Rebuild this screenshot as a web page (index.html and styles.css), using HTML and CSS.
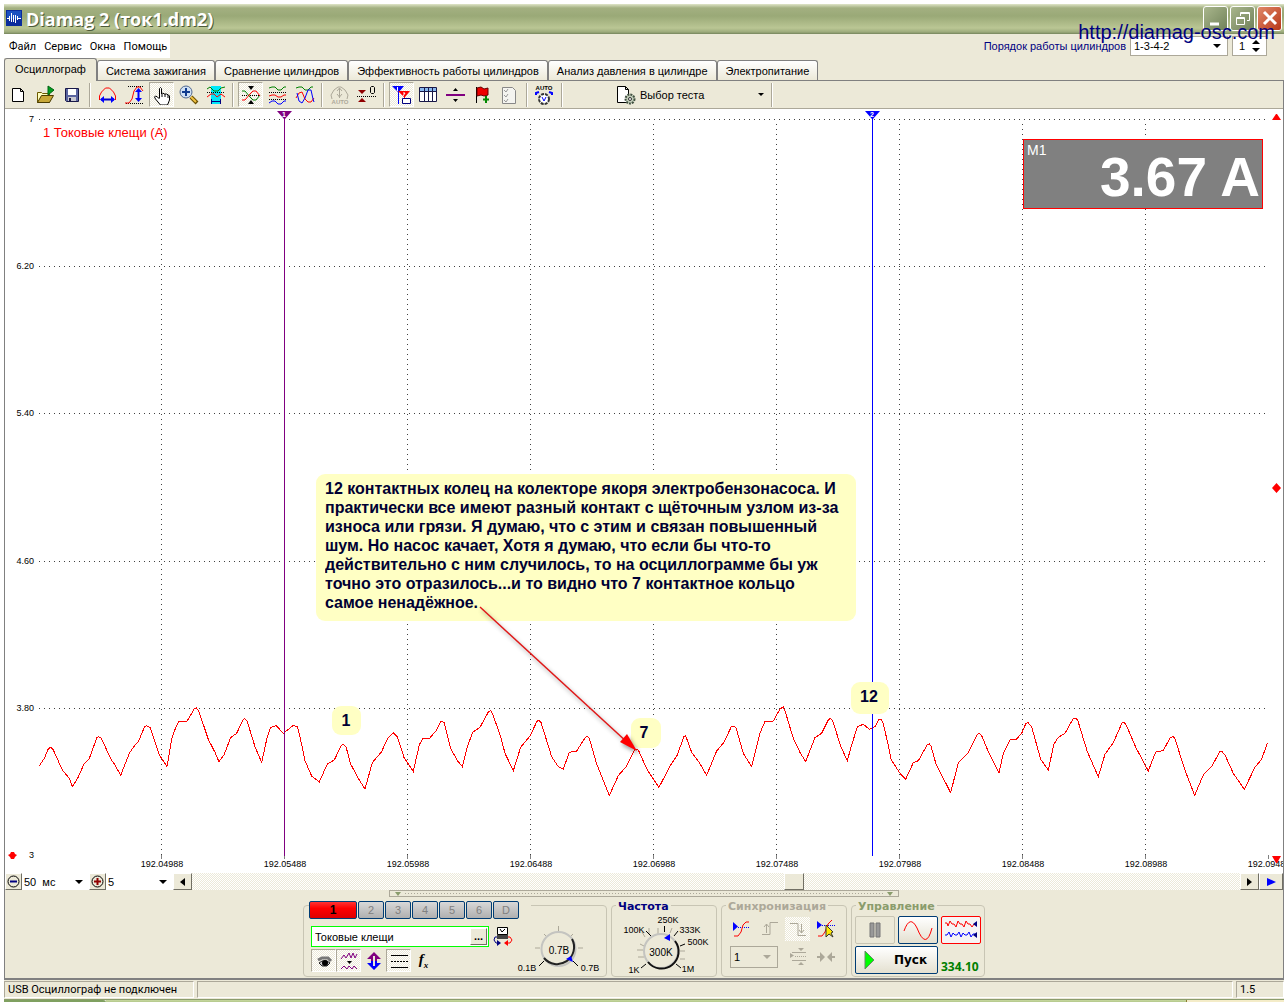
FILE: index.html
```html
<!DOCTYPE html>
<html lang="ru">
<head>
<meta charset="utf-8">
<title>Diamag 2 (ток1.dm2)</title>
<link rel="stylesheet" href="styles.css">
</head>
<body>
<div class="window">
  <header class="titlebar">
    <svg class="app-icon" width="16" height="16" viewBox="0 0 16 16"><rect width="16" height="16" fill="#0a2c9c"/><rect x="1" y="1" width="14" height="8" fill="#1a50c0"/><path d="M1 8.500h2M3.500 6v5M5.500 3v9M7.500 5v7M9.500 5v8M11.500 6v4M12 8.500h3" fill="none" stroke="#fff"/></svg>
    <h1>Diamag 2 (ток1.dm2)</h1>
    <div class="window-buttons">
      <button class="win-btn" aria-label="Свернуть"><svg width="20" height="20" viewBox="0 0 20 20"><path d="M4 16h9" stroke="#fff" stroke-width="3"/></svg></button>
      <button class="win-btn" aria-label="Развернуть"><svg width="20" height="20" viewBox="0 0 20 20" fill="none" stroke="#fff"><path d="M7.500 8V4.500h9v8H14M7 5.500h10M3.500 9.500h8v7h-8zM3 10.500h9"/></svg></button>
      <button class="win-btn close" aria-label="Закрыть"><svg width="20" height="20" viewBox="0 0 20 20"><path d="M4 4l12 12M16 4L4 16" stroke="#fff" stroke-width="3"/></svg></button>
    </div>
  </header>
  <a class="site-link" href="http://diamag-osc.com">http://diamag-osc.com</a>

  <div class="menu-row">
    <nav class="menu">
      <a href="#file">Файл</a><a href="#service">Сервис</a><a href="#windows">Окна</a><a href="#help">Помощь</a>
    </nav>
    <div class="order">
      <label for="order">Порядок работы цилиндров</label>
      <span class="drop framed order-drop"><select id="order"><option>1-3-4-2</option></select><svg width="8" height="4" viewBox="0 0 8 4"><path d="M0 0h8L4 4z"/></svg></span>
      <span class="spin framed"><input id="cyl" aria-label="Цилиндр" value="1"><svg width="8" height="12" viewBox="0 0 8 12"><path d="M0 4h8L4 0zM0 8h8l-4 4z"/></svg></span>
    </div>
  </div>

  <nav class="tabs">
    <button class="tab active">Осциллограф</button>
    <button class="tab">Система зажигания</button>
    <button class="tab">Сравнение цилиндров</button>
    <button class="tab">Эффективность работы цилиндров</button>
    <button class="tab">Анализ давления в цилиндре</button>
    <button class="tab">Электропитание</button>
  </nav>

  <main class="page">
    <div class="toolbar">
      <button class="tool" aria-label="Новый"><svg viewBox="0 0 20 20"><path d="M3.500 3.500h8l3 3v10h-11zM11.500 3.500v3h3" fill="#fff" stroke="#000"/></svg></button>
      <button class="tool" aria-label="Открыть"><svg viewBox="0 0 20 20"><path d="M1.500 17.500v-10h4l1 1h7v9z" fill="#ffffc0" stroke="#6b5a00"/><path d="M1.500 17.500l4-7h12l-4 7z" fill="#c8a838" stroke="#4a3c00"/><path d="M12 1l6 4-6 5z" fill="#00a020" stroke="#006010"/></svg></button>
      <button class="tool" aria-label="Сохранить"><svg viewBox="0 0 20 20"><path d="M2.500 3.500h13v13h-12l-1-1z" fill="#5a64a0" stroke="#181848"/><path d="M5 4h8v6H5z" fill="#fff"/><path d="M5 12h8v4H5z" fill="#c8c8d0"/><path d="M6 13h2v3H6z" fill="#181848"/></svg></button>
      <span class="sep"></span>
      <button class="tool" aria-label="Период"><svg viewBox="0 0 20 20" fill="none"><path d="M1.500 15v-4l2-4 4-4h4l4 4 2 4v4" stroke="#f00"/><path d="M3 14.500h13" stroke="#00c" stroke-width="2"/><path d="M6 11v7l-4-3.500zM13 11v7l4-3.500z" fill="#00f"/></svg></button>
      <button class="tool" aria-label="Амплитуда"><svg viewBox="0 0 20 20" fill="none"><path d="M3 1.500h15M1 18.500h17" stroke="#000" stroke-dasharray="1 1"/><path d="M0 18h4l3-4 2-8 3-4h3l3 4" stroke="#f00"/><path d="M13.500 5v10" stroke="#00f" stroke-width="2"/><path d="M10 7l3.500-4L17 7zM10 13h7l-3.500 4z" fill="#00f"/></svg></button>
      <button class="tool pressed" aria-label="Рука"><svg viewBox="0 0 20 20"><path d="M7.500 13V3.500l1-1 1 1V9l1-1 2 1 2-0 2 1 1 1v4l-2 5h-7l-5-6-1-2 1-1 2 1 2 2M10 9v3M13 9v3M16 10v3" fill="#fff" stroke="#000"/></svg></button>
      <button class="tool" aria-label="Лупа"><svg viewBox="0 0 20 20"><path d="M12 12l6 6" stroke="#6b5000" stroke-width="4"/><path d="M12 12l5 5" stroke="#f0c040" stroke-width="2"/><circle cx="7" cy="7" r="6" fill="#cfe0f4" stroke="#506890" stroke-width="1"/><path d="M3 7h8M7 3v8" stroke="#103c90" stroke-width="2"/></svg></button>
      <button class="tool" aria-label="Фрагмент"><svg viewBox="0 0 20 20" fill="none"><path d="M5 1h10v18H5z" fill="#00e8f8"/><path d="M1 4l3-2 4 4h4l3-3 4-1" stroke="#008000"/><path d="M1 7.500h18" stroke="#000" stroke-dasharray="1 1"/><path d="M1 12l4-3h3l3 3 4-3 4 3" stroke="#f00"/><path d="M5.500 14v5M14.500 14v5M6 16.500h8" stroke="#000080"/></svg></button>
      <span class="sep"></span>
      <button class="tool pressed" aria-label="Совместить"><svg viewBox="0 0 20 20" fill="none"><path d="M1 10.500h18" stroke="#000" stroke-dasharray="1 1"/><path d="M1 6h3l5 6 3 3h3l4-5" stroke="#008000"/><path d="M1 15h3l5-6 3-3h3l4 5" stroke="#f00"/><path d="M7 1h6l-3 4zM7 19h6l-3-4z" fill="#000"/></svg></button>
      <button class="tool" aria-label="Разделить"><svg viewBox="0 0 20 20" fill="none"><path d="M1 3l3-1h3l3 3h3l3-3h2" stroke="#008000"/><path d="M1 7.500h18M1 14.500h18" stroke="#000" stroke-dasharray="1 1"/><path d="M1 11l3-1h3l3 2h3l3-2h2" stroke="#f00"/><path d="M1 18l3-2h3l3 3h3l3-3h2" stroke="#00f"/></svg></button>
      <button class="tool" aria-label="Наложить"><svg viewBox="0 0 20 20" fill="none"><path d="M1 3l3-1h3l3 3h3l3-3h2" stroke="#008000"/><path d="M1 13l3-5 3-1 3 7 3 3h3l3-4" stroke="#f00"/><path d="M2 8l2 8 3 2 3-5 3-8h3l2 9 1 3" stroke="#00f"/></svg></button>
      <span class="sep"></span>
      <button class="tool" aria-label="Авто амплитуда" disabled><svg viewBox="0 0 20 20" fill="none" stroke="#aca899"><path d="M2 14l-1-4 3-5 4-3h3l4 3 3 5-1 4M9.500 3v10M7 6l2.500-3L12 6M7 9l2.500 3L12 9"/><text x="10" y="19" class="icon-text muted">AUTO</text></svg></button>
      <button class="tool" aria-label="Ноль"><svg viewBox="0 0 20 20"><path d="M1 5h8l-4 4zM1 17h8l-4-4z" fill="#900000"/><path d="M0 11.500h19" stroke="#000" stroke-dasharray="1 1"/><path d="M13.500 2.500l1-1h2l1 1v5l-1 1h-2l-1-1z" fill="none" stroke="#000"/></svg></button>
      <span class="sep"></span>
      <button class="tool pressed" aria-label="Маркеры"><svg viewBox="0 0 20 20"><path d="M0 1h12L7 7v12H6V7z" fill="#00f"/><path d="M6 6h12l-5 6v4h-1v-4z" fill="#f00"/><path d="M5.500 2v4M11 8h2l-2 3" fill="none" stroke="#fff"/><path d="M10.500 13.500h8v5h-8z" fill="#fff" stroke="#000080"/></svg></button>
      <button class="tool" aria-label="Таблица"><svg viewBox="0 0 20 20"><path d="M.500 2.500h17v14h-17z" fill="#fff" stroke="#181848"/><path d="M1 3h16v3H1z" fill="#88b8f0"/><path d="M1 6.500h16M5.500 3v13M9.500 3v13M13.500 3v13" stroke="#181848"/></svg></button>
      <button class="tool" aria-label="Линия"><svg viewBox="0 0 20 20"><path d="M0 10h19" stroke="#800080" stroke-width="2"/><path d="M7 6h5L9.500 3zM7 14h5l-2.500 3z"/></svg></button>
      <button class="tool" aria-label="Флаг"><svg viewBox="0 0 20 20"><path d="M3.500 2v16" stroke="#000"/><path d="M4 3l4-1 3 2 4-1v7l-4 1-3-1-4 1z" fill="#e00" stroke="#600"/><path d="M10 14.500h6M13 11v7" stroke="#080" stroke-width="2"/></svg></button>
      <button class="tool" aria-label="Список"><svg viewBox="0 0 20 20"><path d="M2.500 2.500h10l3 3v13h-13z" fill="#f4f4f0" stroke="#888"/><path d="M4 5l2 2 2-3M4 10l2 2 2-3M4 15l2 2 2-3" fill="none" stroke="#999"/></svg></button>
      <span class="sep"></span>
      <button class="tool" aria-label="Авто"><svg viewBox="0 0 20 20"><text x="9" y="5" class="icon-text">AUTO</text><circle cx="9" cy="14" r="5" fill="#fff" stroke="#333" stroke-width="2" stroke-dasharray="3 1"/><path d="M7 12l2 4 2-4" fill="none" stroke="#00f"/><path d="M1 10V8l3-1M17 10V8l-3-1" fill="none" stroke="#00f" stroke-width="2"/></svg></button>
      <span class="sep"></span>
      <button class="test-select"><svg width="20" height="20" viewBox="0 0 20 20"><path d="M1.500 1.500h8l3 3v13h-11zM9.500 1.500v3h3" fill="#fff" stroke="#000"/><circle cx="14" cy="14" r="4.500" fill="#c0ccb8" stroke="#405040" stroke-width="2" stroke-dasharray="2 1"/><circle cx="14" cy="14" r="1.500" fill="#fff" stroke="#333"/></svg><span>Выбор теста</span><svg class="caret" width="6" height="3" viewBox="0 0 6 3"><path d="M0 0h6L3 3z"/></svg></button>
      <span class="sep"></span>
    </div>

    <svg class="chart" viewBox="5 109 1278 764">
      <g class="grid">
        <path d="M39 119.500H1267M39 266.500H1267M39 413.500H1267M39 561.500H1267M39 708.500H1267"/>
        <path d="M161.500 124V855M284.500 124V855M407.500 124V855M530.500 124V855M653.500 124V855M776.500 124V855M899.500 124V855M1022.500 124V855M1145.500 124V855"/>
      </g>
      <path class="ticks" d="M161.500 855v4M284.500 855v4M407.500 855v4M530.500 855v4M653.500 855v4M776.500 855v4M899.500 855v4M1022.500 855v4M1145.500 855v4M1268.500 855v4"/>
      <g class="axis y-axis">
        <text x="34" y="122">7</text><text x="34" y="269">6.20</text><text x="34" y="416">5.40</text><text x="34" y="564">4.60</text><text x="34" y="711">3.80</text><text x="34" y="858">3</text>
      </g>
      <g class="axis x-axis">
        <text x="162" y="867">192.04988</text><text x="285" y="867">192.05488</text><text x="408" y="867">192.05988</text><text x="531" y="867">192.06488</text><text x="654" y="867">192.06988</text><text x="777" y="867">192.07488</text><text x="900" y="867">192.07988</text><text x="1023" y="867">192.08488</text><text x="1146" y="867">192.08988</text><text x="1269" y="867">192.09488</text>
      </g>
      <text class="legend" x="43" y="137">1 Токовые клещи (А)</text>
      <g class="wave">
        <polyline transform="translate(0 690) scale(.3333)" points="118,227 133,205 145,176 152,172 160,180 187,240 208,265 217,290 233,265 252,222 267,208 291,142 296,140 304,145 333,208 345,225 362,256 388,190 405,165 415,155 434,110 440,107 450,112 478,195 501,230 515,148 527,113 538,93 560,96 583,56 589,53 597,65 625,148 645,187 657,215 672,195 692,143 710,130 730,88 735,86 742,95 765,170 785,217 802,140 812,112 829,107 850,130 865,118 880,106 892,110 900,140 915,212 935,258 958,276 982,222 1003,210 1024,166 1030,163 1038,170 1052,222 1075,265 1095,297 1117,218 1145,185 1163,145 1180,128 1192,140 1212,202 1240,244 1258,165 1268,146 1290,144"/>
        <polyline transform="translate(430 690) scale(.3333)" points="0,143 20,120 33,93 42,97 62,175 82,212 97,230 112,170 128,127 150,112 175,66 182,62 188,72 212,140 225,190 250,242 272,172 300,138 321,94 326,91 333,97 365,200 385,230 400,237 418,187 440,183 466,142 472,140 478,145 500,222 538,316 565,257 590,228 615,178 625,180 652,240 687,292 722,225 742,195 762,139 767,137 785,187 808,218 830,256 860,183 882,157 904,110 911,108 918,113 940,190 965,230 990,130 1005,94 1030,93 1050,57 1060,50 1068,72 1090,145 1110,187 1127,215 1155,143 1175,130 1196,88 1202,86 1208,92 1232,168 1252,212 1261,180"/>
        <polyline transform="translate(850 670) scale(.3333)" points="0,242 22,170 40,163 58,178 75,170 86,149 92,147 98,155 115,225 123,268 150,310 167,328 190,278 205,272 232,224 238,222 243,228 258,282 302,368 325,278 355,248 383,192 389,190 395,197 415,245 447,309 460,250 480,210 500,207 515,190 528,160 534,158 545,170 572,268 595,300 612,222 625,202 645,190 669,147 677,145 683,150 712,245 745,320 765,253 790,218 816,159 823,157 830,168 858,233 895,303 917,246 940,242 961,202 969,200 975,206 1003,295 1034,376 1060,315 1085,290 1109,246 1117,246 1125,255 1150,310 1183,358 1215,292 1235,268 1252,220"/>
      </g>
      <g class="cursor cursor-a"><path class="stem" d="M284.500 117V856"/><path d="M277 111h15l-7 8h-1z"/><text x="284" y="117">1</text></g>
      <g class="cursor cursor-b"><path class="stem" d="M872.500 117V856"/><path d="M865 111h15l-7 8h-1z"/><text x="872" y="117">2</text></g>
      <path fill="#f00" d="M1272 120h9l-4-6h-1zM1272 856h9l-4 7h-1zM1272 488l4.500-5 4.500 5-4.500 5zM8 855l2-1 1-2h3l1 2 2 1-2 2-1 2h-3l-1-2z"/>
      <g>
        <rect x="1023.500" y="139.500" width="239" height="69" fill="#808080" stroke="#f00"/>
        <text class="meter-name" x="1027" y="155">M1</text>
        <text class="meter-value" x="1260" y="196">3.67 A</text>
      </g>
      <g class="notes">
        <rect x="332" y="706" width="29" height="29" rx="9"/><rect x="631" y="718" width="30" height="30" rx="9"/><rect x="851" y="682" width="38" height="32" rx="9"/><rect x="316" y="474" width="540" height="147" rx="9"/>
        <text x="346" y="726">1</text><text x="644" y="738">7</text><text x="869" y="702">12</text>
        <foreignObject x="325" y="479" width="520" height="140"><p class="note-text">12 контактных колец на колекторе якоря электробензонасоса. И практически все имеют разный контакт с щёточным узлом из-за износа или грязи. Я думаю, что с этим и связан повышенный шум. Но насос качает, Хотя я думаю, что если бы что-то действительно с ним случилось, то на осциллограмме бы уж точно это отразилось...и то видно что 7 контактное кольцо самое ненадёжное.</p></foreignObject>
      </g>
      <g class="arrow"><path d="M480 607L628 743" fill="none" stroke="#e01818" stroke-width="1.500"/><path d="M637 751l-17-9 7-8z" fill="#f00"/></g>
    </svg>

    <div class="scale-row">
      <button class="raised mini" aria-label="Уменьшить"><svg width="13" height="13" viewBox="0 0 13 13"><circle cx="6.500" cy="6.500" r="5.500" fill="none" stroke="#000"/><path d="M3 6.500h7" stroke="#000080" stroke-width="2"/></svg></button>
      <span class="drop scale-drop"><select aria-label="Развёртка"><option>50&nbsp; мс</option></select><svg width="8" height="4" viewBox="0 0 8 4"><path d="M0 0h8L4 4z"/></svg></span>
      <button class="raised mini" aria-label="Увеличить"><svg width="13" height="13" viewBox="0 0 13 13"><circle cx="6.500" cy="6.500" r="5.500" fill="none" stroke="#000"/><path d="M3 6.500h7M6.500 3v7" stroke="#900000" stroke-width="2"/></svg></button>
      <span class="drop scale-drop"><select aria-label="Деления"><option>5</option></select><svg width="8" height="4" viewBox="0 0 8 4"><path d="M0 0h8L4 4z"/></svg></span>
      <button class="raised arrow-btn" aria-label="Влево"><svg width="5" height="8" viewBox="0 0 5 8"><path d="M5 0v8L0 4z"/></svg></button>
      <div class="track"><span class="before"></span><button class="raised thumb" aria-label="Прокрутка"></button><span class="after"></span></div>
      <button class="raised arrow-btn" aria-label="Вправо"><svg width="5" height="8" viewBox="0 0 5 8"><path d="M0 0v8l5-4z"/></svg></button>
      <button class="raised play-btn" aria-label="В конец"><svg width="9" height="8" viewBox="0 0 9 8"><path d="M0 0v8l9-4z" fill="#00f"/></svg></button>
    </div>

    <div class="grip"><svg width="6" height="4" viewBox="0 0 6 4"><path d="M0 0h6L3 4z"/></svg><i></i><svg width="6" height="4" viewBox="0 0 6 4"><path d="M0 0h6L3 4z"/></svg></div>

    <div class="panel">
      <section class="group channels">
        <div class="channel-tabs">
          <button class="channel on">1</button><button class="channel">2</button><button class="channel">3</button><button class="channel">4</button><button class="channel">5</button><button class="channel">6</button><button class="channel">D</button>
        </div>
        <div class="channel-body">
          <div class="channel-form">
            <div class="sensor-row">
              <div class="sensor"><input aria-label="Датчик" value="Токовые клещи"><button class="raised">...</button></div>
              <svg width="20" height="20" viewBox="0 0 20 20"><path d="M4.500 1.500h10v7h-10z" fill="#fff" stroke="#000"/><path d="M4 9h11v4H4z" fill="#444"/><path d="M7 3l2 3 3-3" fill="none" stroke="#000"/><path d="M4 11H2l-1 3 2 3h3" fill="none" stroke="#000080"/><path d="M15 11h2l2 3-2 3h-3" fill="none" stroke="#f00"/><path d="M4 14l4 3-4 3z" fill="#000080"/><path d="M15 14l-4 3 4 3z" fill="#f00"/></svg>
            </div>
            <div class="channel-tools">
              <button class="tool pressed" aria-label="Показать"><svg viewBox="0 0 20 20"><path d="M4 9l4-2h6l3 3" fill="none" stroke="#777" stroke-width="3"/><path d="M5 12l3-2h5l3 2-3 3H8z" fill="#ccc" stroke="#222"/><circle cx="11" cy="12" r="3" fill="#000"/></svg></button>
              <button class="tool pressed" aria-label="Сглаживание"><svg viewBox="0 0 20 20" fill="none" stroke="#800080"><path d="M2 8l3-4 2 3 3-5 2 5 2-5 2 5 2-4M2 18l3-3 3 3 2-3 3 3 2-3 3 3"/><path d="M8 10h5l-2.500 3z" fill="#000" stroke="none"/></svg></button>
              <button class="tool" aria-label="Инверсия"><svg viewBox="0 0 20 20"><path d="M10 1l7 7h-4v2H7V8H3z" fill="#800080"/><path d="M10 19l7-7h-4v-2H7v2H3z" fill="#00f"/><path d="M10 5v10" stroke="#ece9d8" stroke-width="2"/></svg></button>
              <button class="tool pressed" aria-label="Линии"><svg viewBox="0 0 20 20"><path d="M2 4.500h17M2 16.500h17" stroke="#000"/><path d="M2 10.500h17" stroke="#000" stroke-dasharray="2 1"/></svg></button>
              <button class="tool fx" aria-label="Функция">f<sub>x</sub></button>
            </div>
          </div>
          <svg class="knob" width="86" height="60" viewBox="515 920 86 60">
            <path class="dial-tick light" d="M557.500 927v5M543 935l3 3M572 935l-3 3M534 949h5M577 949h5"/>
            <path class="dial-tick" d="M538 967l5-5M577 967l-5-5"/>
            <circle cx="557.500" cy="950" r="17" fill="none" stroke="#c4c4c0" stroke-width="2"/><path d="M571 940a17 17 0 0 1-28 19" fill="none" stroke="#222" stroke-width="2"/>
            <path d="M565 960l5-3 2 6z" fill="#00f"/>
            <text class="dial-value" x="558" y="955">0.7В</text><text class="dial-label" x="526" y="972">0.1В</text><text class="dial-label" x="589" y="972">0.7В</text>
          </svg>
        </div>
      </section>

      <section class="group frequency">
        <h2>Частота</h2>
        <svg class="knob" width="103" height="64" viewBox="612 912 103 64">
          <g class="dial-tick light"><path d="M649 927v6M658 927v6M642 931l3 5M672 927l-2 5M637 949h6M638 956h6M640 943l4 2M680 958h5M680 950h5"/></g>
          <path class="dial-tick" d="M664.500 925v6M646 930l5 5M678 930l-4 5M680 945l5-2M641 967l5-4M681 967l-5-4"/>
          <circle cx="661" cy="950" r="17" fill="none" stroke="#c4c4c0" stroke-width="2"/><path d="M675 940a17 17 0 0 1-27 21" fill="none" stroke="#111" stroke-width="2"/>
          <path d="M664 937l6-4v7z" fill="#00f"/>
          <text class="dial-value" x="661" y="955">300K</text><text class="dial-label" x="634" y="932">100K</text><text class="dial-label" x="668" y="922">250K</text><text class="dial-label" x="690" y="932">333K</text><text class="dial-label" x="698" y="944">500K</text><text class="dial-label" x="634" y="972">1K</text><text class="dial-label" x="688" y="971">1M</text>
        </svg>
      </section>

      <section class="group sync">
        <h2>Синхронизация</h2>
        <div class="sync-grid">
          <button class="tool" aria-label="Уровень"><svg viewBox="0 0 20 20"><path d="M1 3v9l5-4.500z" fill="#00f"/><path d="M6 8.500h12" stroke="#00f" stroke-dasharray="1 1"/><path d="M2 17h4l3-4 2-7 3-3h3" fill="none" stroke="#f00"/></svg></button>
          <button class="tool" disabled aria-label="Фронт"><svg viewBox="0 0 20 20" fill="none" stroke="#aca899"><path d="M2 15.500h8v-12h8M6.500 5v9M4 8l2.500-3L9 8"/></svg></button>
          <button class="tool checker" disabled aria-label="Спад"><svg viewBox="0 0 20 20" fill="none" stroke="#aca899"><path d="M2 4.500h8v12h8M13.500 5v9M11 11l2.500 3 2.500-3"/></svg></button>
          <button class="tool" aria-label="Указать"><svg viewBox="0 0 20 20"><path d="M1 2v8l5-4z" fill="#00f"/><path d="M6 6.500h13" stroke="#00f" stroke-dasharray="1 1"/><path d="M2 17h4l3-4 3-8 4-4" fill="none" stroke="#f00"/><path d="M10 6l7 7-2 1 2 4-4-3-3 3z" fill="#ffe800" stroke="#333"/></svg></button>
          <span class="drop sync-drop"><select disabled aria-label="Канал"><option>1</option></select><svg width="8" height="4" viewBox="0 0 8 4"><path d="M0 0h8L4 4z" fill="#aca899"/></svg></span>
          <button class="tool" disabled aria-label="Окно"><svg viewBox="0 0 20 20" fill="#aca899" stroke="#aca899"><path d="M2 6v5l4-2.500zM10 1h6l-3 3zM10 18h6l-3-3z" stroke="none"/><path d="M4 5.500h14M4 13.500h14"/><path d="M7 9.500h11" stroke-dasharray="1 1"/></svg></button>
          <button class="tool" disabled aria-label="Сжать"><svg viewBox="0 0 20 20" fill="#aca899"><path d="M1 9h3V5l5 5-5 5v-4H1zM19 9h-3V5l-5 5 5 5v-4h3z"/></svg></button>
        </div>
      </section>

      <section class="group control">
        <h2>Управление</h2>
        <div class="control-grid">
          <button class="big" disabled aria-label="Пауза"><svg width="14" height="16" viewBox="0 0 14 16"><path d="M2 1h4v14H2zM8 1h4v14H8z" fill="#999" stroke="#777"/></svg></button>
          <button class="big active" aria-label="Синус"><svg width="30" height="22" viewBox="0 0 30 22"><path d="M1 12Q7-5 14 9Q23 32 29 9" fill="none" stroke="#f00"/></svg></button>
          <button class="big rec" aria-label="Запись"><svg width="34" height="24" viewBox="0 0 34 24" fill="none"><path d="M1 5h2l1 3 2-5 2 3h2l2 3 2-6 2 3h2l2 3 2-6 2 3h2l2 3 2-3" stroke="#f00"/><path d="M1 17h2l2-3 2 5 2-4 2 2h2l2-3 2 5 2-4 2 2h2l2-3 2 5 2-3h2" stroke="#00f"/><path d="M33 3v6l-4-3zM33 14v6l-4-3z" fill="#000080"/></svg></button>
          <button class="big active start"><svg width="12" height="20" viewBox="0 0 12 20"><path d="M1 1v18l9-9z" fill="#0f0" stroke="#686"/></svg><span>Пуск</span></button>
          <output class="rate">334.10</output>
        </div>
      </section>
    </div>
  </main>

  <footer class="status">
    <span class="cell usb">USB Осциллограф не подключен</span><span class="cell fill"></span><span class="cell version">1.5</span>
  </footer>
  <div class="taskbar"><span class="start-edge"></span><span class="tasks"></span><span class="tray"></span></div>
</div>
</body>
</html>
```

FILE: styles.css
```css
* { box-sizing: border-box; }

body {
  margin: 0;
  padding: 4px 4px 0;
  background: #fff;
  color: #000;
  font: 11px/14px "Liberation Sans", Arial, sans-serif;
}

button, select, input {
  margin: 0;
  padding: 0;
  border: 0;
  border-radius: 0;
  background: none;
  color: inherit;
  font: inherit;
  appearance: none;
}
select:disabled { opacity: 1; }

h1, h2, p { margin: 0; }
svg { display: block; }

.window { position: relative; background: #ece9d8; }

.titlebar {
  display: flex;
  align-items: center;
  height: 30px;
  padding: 0 2px;
  background: linear-gradient(#dfe5c8 0, #a3b081 4px, #9aa977 12px, #bac694 24px, #9dab7c 28px, #75845c 30px);
}
.app-icon { margin: 0 4px 2px 0; }
.titlebar h1 {
  flex: 1;
  color: #fff;
  font: bold 18px/30px "Open Sans", "Noto Sans", sans-serif;
  text-shadow: 1px 1px #4c5a38;
}
.window-buttons { display: flex; gap: 2px; margin-bottom: 2px; }
.win-btn {
  display: grid;
  place-items: center;
  width: 25px;
  height: 25px;
  border: 1px solid #fff;
  border-radius: 3px;
  background: linear-gradient(135deg, #a9b68c, #71825a);
}
.win-btn.close { background: linear-gradient(135deg, #e08868, #b83818); }

.site-link {
  position: absolute;
  top: 16px;
  right: 9px;
  color: #000080;
  font-size: 20px;
  line-height: 24px;
  text-decoration: none;
}

.menu-row { display: flex; justify-content: space-between; height: 24px; }
.menu {
  display: flex;
  gap: 8px;
  width: 166px;
  padding: 0 5px;
  background: #fff;
  font: 11px/26px Roboto, sans-serif;
}
.menu a { color: #000; text-decoration: none; }
.order { display: flex; gap: 4px; align-items: flex-start; padding: 2px 17px 0 0; }
.order label { color: #000080; line-height: 20px; }
.framed { height: 20px; border: 1px solid #aca899; background: #fff; }
.order-drop { width: 98px; }

.drop { display: grid; align-items: center; }
.drop select, .drop svg { grid-area: 1 / 1; }
.drop select { width: 100%; height: 100%; padding-left: 3px; }
.drop svg { justify-self: end; margin-right: 6px; pointer-events: none; }
.spin { display: flex; align-items: center; justify-content: space-between; width: 35px; padding: 0 6px; }
.spin input { width: 12px; }

.tabs { display: flex; align-items: flex-end; height: 22px; }
.tab {
  height: 20px;
  padding: 0 8px;
  border: 1px solid #808080;
  border-bottom: 0;
  border-radius: 3px 3px 0 0;
  background: linear-gradient(#fff, #ece9d8);
}
.tab.active { height: 23px; margin-bottom: -1px; padding: 0 10px 2px; background: #ece9d8; position: relative; }

.page { border: 1px solid #808080; border-bottom-width: 2px; }

.toolbar { display: flex; align-items: center; height: 28px; border-bottom: 1px solid #aca899; }
.tool {
  display: grid;
  flex: none;
  place-items: center;
  width: 25px;
  height: 25px;
  margin: 0 1px;
}
.tool svg { width: 20px; height: 20px; }
.tool.pressed {
  border: 1px solid #aca899;
  border-color: #aca899 #fff #fff #aca899;
}
.tool.pressed, .checker, .track { background: repeating-conic-gradient(#fff 0 25%, #ece9d8 0 50%) 0 0 / 2px 2px; }
.sep { width: 2px; height: 24px; margin: 0 3px; border-left: 1px solid #aca899; border-right: 1px solid #fff; }
.icon-text { fill: #000; stroke: none; font: bold 6px "Liberation Sans", sans-serif; text-anchor: middle; }
.icon-text.muted { fill: #aca899; }
.test-select { display: flex; align-items: center; width: 152px; margin-left: 50px; text-align: left; }
.test-select span { flex: 1; padding-left: 4px; }
.test-select .caret { margin-right: 4px; }

.chart { width: 100%; background: #fff; overflow: hidden; }
.grid { stroke: #404040; stroke-dasharray: 1 4; fill: none; shape-rendering: crispEdges; }
.ticks { stroke: #808080; }
.axis { font-size: 9px; }
.y-axis { text-anchor: end; }
.x-axis { text-anchor: middle; }
.legend { fill: #f00; font-size: 13px; }
.wave { fill: none; stroke: #f00; }
.wave polyline { vector-effect: non-scaling-stroke; shape-rendering: crispEdges; }
.cursor-a { fill: #800080; stroke: #800080; }
.cursor-b { fill: #00f; stroke: #00f; }
.cursor path { stroke: none; }
.cursor .stem { stroke: inherit; }
.cursor text { fill: #fff; stroke: none; font: bold 7px "Liberation Sans", sans-serif; text-anchor: middle; }
.meter-name { fill: #fff; font-size: 14px; }
.meter-value { fill: #fff; font-size: 55px; font-weight: bold; text-anchor: end; }
.notes rect { fill: #ffffc4; }
.notes text { fill: #000033; font-size: 16px; font-weight: bold; text-anchor: middle; }
.note-text { color: #000033; font-size: 16px; font-weight: bold; line-height: 19px; }
.arrow { filter: drop-shadow(2px 3px 2px #0006); }

.scale-row { display: flex; height: 17px; background: #fff; }
.raised {
  display: grid;
  flex: none;
  place-items: center;
  border: 1px solid;
  border-color: #fff #716f64 #716f64 #fff;
  background: #ece9d8;
}
.mini { width: 17px; }
.scale-drop { width: 67px; }
.scale-drop select { padding-left: 2px; }
.arrow-btn { width: 19px; }
.play-btn { width: 24px; }
.track { display: flex; flex: 1; }
.before { flex: 591; }
.after { flex: 436; }
.thumb { width: 20px; }

.grip {
  display: flex;
  align-items: center;
  gap: 4px;
  width: 510px;
  height: 7px;
  margin: 0 auto;
  padding: 0 5px;
  border: 1px solid #aca899;
}
.grip svg { fill: #8a9c6c; }
.grip i { flex: 1; height: 1px; background: repeating-linear-gradient(90deg, #aca899 0 1px, transparent 1px 3px); }

.panel { display: flex; justify-content: center; gap: 4px; padding: 8px 0 1px; }
.group { height: 72px; border: 1px solid #c8c5b4; border-radius: 4px; }
.group h2 {
  width: max-content;
  margin: -5px 0 0 4px;
  padding: 0 2px;
  background: #ece9d8;
  font: bold 11px/12px "DejaVu Sans", sans-serif;
}
.channels { width: 304px; }
.frequency { width: 106px; }
.sync { width: 126px; }
.control { width: 134px; }
.frequency h2 { color: #000080; }
.sync h2 { color: #aca899; }
.control h2 { color: #8a9c6c; }

.channel-tabs { display: flex; gap: 1px; width: 222px; margin: -5px 0 0 5px; background: #ece9d8; }
.channel {
  width: 26px;
  height: 18px;
  border: 1px solid #003c74;
  border-radius: 2px;
  background: linear-gradient(#d8d8d8, #b0b0b0);
  color: #808080;
}
.channel.on { width: 48px; background: linear-gradient(#f33, #f00 40%, #d00); color: #000; font-weight: bold; font-size: 12px; }
.channel-body { display: flex; height: 58px; }
.channel-form { display: flex; flex-direction: column; gap: 2px; width: 212px; padding: 7px 0 0 7px; }
.sensor-row { display: flex; gap: 4px; }
.sensor { display: flex; align-items: center; width: 178px; height: 21px; padding: 0 1px 0 3px; border: 1px solid #0f0; background: #fff; }
.sensor input { flex: 1; min-width: 0; }
.sensor .raised { width: 17px; height: 17px; padding-bottom: 5px; font-weight: bold; }
.channel-tools { display: flex; }
.channel-tools .tool { height: 23px; margin: 0; }
.fx { font: italic bold 15px/15px "Liberation Serif", serif; }
.fx sub { font-size: 9px; line-height: 9px; }
.tool.fx { display: block; }
.knob { flex: none; }

.dial-tick { stroke: #000; fill: none; }
.dial-tick.light { stroke: #aca899; }
.dial-value { font-size: 10px; text-anchor: middle; }
.dial-label { font-size: 9px; text-anchor: middle; }

.sync-grid { display: grid; grid-template-columns: repeat(4, 28px); row-gap: 4px; padding: 4px 0 0 6px; }
.sync-grid .tool { height: 24px; }
.sync-drop { grid-column: span 2; width: 48px; height: 22px; margin: 1px 0 0 2px; border: 1px solid #aca899; }

.control-grid { display: grid; grid-template-columns: repeat(3, 40px); gap: 2px 3px; padding: 3px 0 0 3px; }
.big {
  display: grid;
  place-items: center;
  height: 28px;
  border: 1px solid #c8c5b4;
  border-radius: 2px;
}
.big.active { border-color: #003c74; background: linear-gradient(#fff, #e4e0d0); }
.big.rec { border-color: #f00; background: #f6f4f4; }
.big.start { display: flex; align-items: center; gap: 18px; grid-column: span 2; padding-left: 8px; font: bold 12px/14px "DejaVu Sans", sans-serif; }
.rate { align-self: end; color: #008000; font: bold 12px/14px "Open Sans", sans-serif; }

.status { display: flex; gap: 3px; height: 19px; padding-top: 1px; }
.cell {
  height: 17px;
  padding: 0 3px;
  border: 1px solid;
  border-color: #aca899 #fff #fff #aca899;
  font: 11px/16px Roboto, sans-serif;
  white-space: nowrap;
}
.usb { width: 190px; }
.fill { flex: 1; }
.version { width: 48px; }

.taskbar { display: flex; height: 4px; border-top: 1px solid #8a9c6c; }
.start-edge { width: 102px; background: #7fa060; border-radius: 0 4px 0 0; }
.tasks { flex: 1; background: linear-gradient(#c8d8a0, #a8c080); }
.tray { width: 98px; border-left: 1px solid #8a7c30; background: #f4ecc8; }
```
